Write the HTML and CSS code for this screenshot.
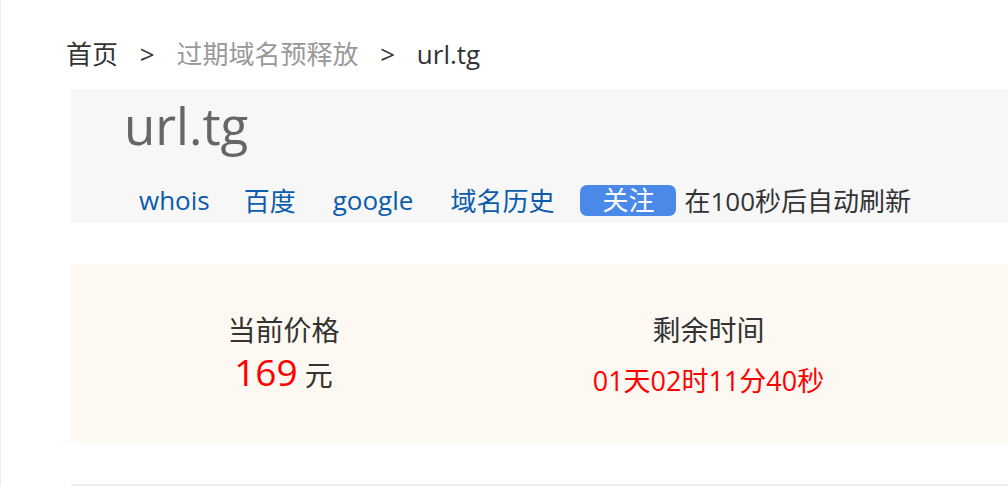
FILE: index.html
```html
<!DOCTYPE html>
<html lang="zh-CN">
<head>
    <meta charset="UTF-8">
    <meta name="viewport" content="width=device-width, initial-scale=1.0">
    <title>url.tg - 过期域名预释放</title>
    <link rel="stylesheet" href="styles.css">
</head>
<body>
    <div class="page">
        <div class="crumbs">
            <a href="#" class="crumb-home">首页</a>
            <span class="sep">&gt;</span>
            <a href="#" class="crumb-cat">过期域名预释放</a>
            <span class="sep">&gt;</span>
            <span class="crumb-cur">url.tg</span>
        </div>
        <div class="head">
            <h1 class="domain">url.tg</h1>
            <div class="links">
                <a href="#">whois</a>
                <a href="#">百度</a>
                <a href="#">google</a>
                <a href="#">域名历史</a>
                <button type="button" class="follow">关注</button>
                <span class="refresh">在<span id="sec">100</span>秒后自动刷新</span>
            </div>
        </div>
        <div class="price">
            <div class="cell">
                <div class="label">当前价格</div>
                <div class="value"><span class="num">169</span> 元</div>
            </div>
            <div class="cell">
                <div class="label">剩余时间</div>
                <div class="countdown">01天02时11分40秒</div>
            </div>
            <div class="cell"></div>
        </div>
        <div class="next"></div>
    </div>
</body>
</html>
```

FILE: styles.css
```css
body {
    margin: 0;
    font-family: "Open Sans", "Noto Sans CJK SC", sans-serif;
    color: #333;
    background-color: #fff;
    border-left: 1px solid #eee;
    min-height: 100vh;
    overflow: hidden;
}
a {
    text-decoration: none;
}
.page {
    width: 1400px;
    padding-left: 65px;
}
.crumbs {
    padding-top: 36px;
    height: 36px;
    line-height: 36px;
    font-size: 26px;
    margin-bottom: 17px;
    white-space: nowrap;
}
.crumbs a,
.crumb-cur {
    color: #333;
}
.crumbs .crumb-cat {
    color: #999;
}
.crumbs .sep {
    display: inline-block;
    margin: 0 15px;
    font-size: 26px;
}
.head {
    margin-left: 5px;
    background-color: #f7f7f7;
    height: 134px;
    box-sizing: border-box;
    padding-top: 4px;
}
.domain {
    margin: 0 0 25px 53px;
    font-size: 51px;
    font-weight: normal;
    line-height: 64px;
    color: #666;
}
.links {
    display: flex;
    align-items: center;
    height: 36px;
    padding-left: 68px;
    font-size: 26px;
    white-space: nowrap;
}
.links a {
    color: #0b5cad;
    margin-right: 37px;
}
.links a:first-child {
    margin-right: 34px;
}
.links a:nth-child(4) {
    margin-right: 26px;
}
.follow {
    font-family: inherit;
    font-size: 26px;
    line-height: 31px;
    height: 31px;
    padding: 0 22px;
    border: none;
    border-radius: 7px;
    background-color: #4a89e8;
    color: #fff;
    margin-right: 8px;
    cursor: pointer;
}
.refresh {
    color: #333;
}
.price {
    margin: 41px 0 0 5px;
    background-color: #fdf9f2;
    display: grid;
    grid-template-columns: 425px 425px 425px;
    height: 179px;
    box-sizing: border-box;
    padding-top: 48px;
}
.cell {
    text-align: center;
}
.label {
    font-size: 28px;
    line-height: 36px;
    color: #333;
}
.value {
    font-size: 28px;
    line-height: 48px;
    color: #333;
}
.num {
    font-size: 37px;
    color: #f00;
}
.countdown {
    padding-top: 18px;
    font-size: 27px;
    line-height: 30px;
    color: #f00;
}
.next {
    margin: 41px 0 0 5px;
    border-top: 2px solid #eee;
    height: 40px;
}
```
